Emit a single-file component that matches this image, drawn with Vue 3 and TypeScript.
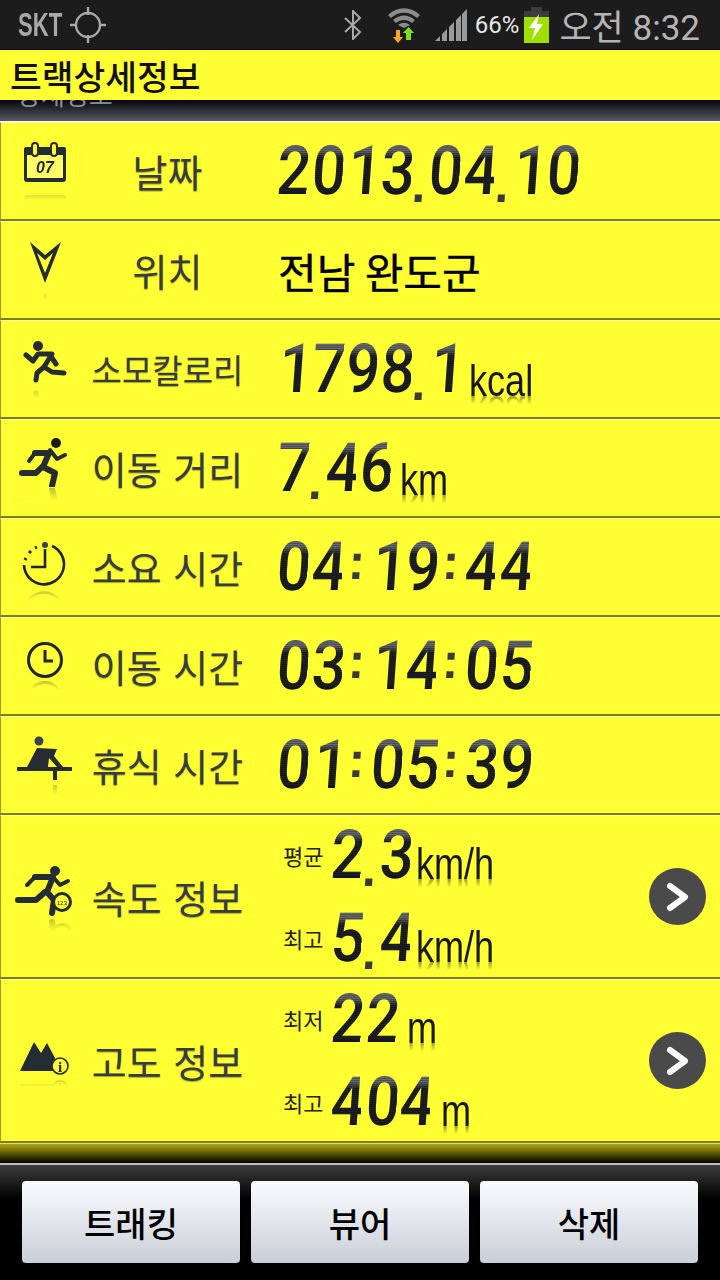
<template>
  <div class="screen">
    <div class="status-bar">
      <span class="carrier">SKT</span>
      <svg class="gps" width="36" height="38" viewBox="0 0 36 38" fill="none" stroke="#a8a8a8" stroke-width="2.4">
        <circle cx="18" cy="19" r="12" />
        <path d="M18 1v8M18 29v8M0 19h7M29 19h7" />
      </svg>
      <span class="spacer"></span>
      <svg class="bt" width="20" height="30" viewBox="0 0 20 30" fill="none" stroke="#a8a8a8" stroke-width="2">
        <path d="M2 8l15 14-7 7V1l7 7L2 22" />
      </svg>
      <svg class="wifi" width="34" height="38" viewBox="0 0 34 38">
        <path d="M1 9C10 0 24 0 33 9l-3 3C22 5 12 5 4 12z" fill="#8c8c8c" />
        <path d="M6 14c7-6 15-6 22 0l-3 3c-5-4-11-4-16 0z" fill="#8c8c8c" />
        <path d="M11 19c4-3 8-3 12 0l-6 3z" fill="#8c8c8c" />
        <path d="M9 24h4v7h3l-5 6-5-6h3z" fill="#f5a623" />
        <path d="M19 34v-7h-3l5.5-6 5.5 6h-3v7z" fill="#7fe01c" />
      </svg>
      <svg class="signal" width="34" height="34" viewBox="0 0 34 34" fill="#9a9a9a">
        <path d="M1 33l5-5v5zM8 33v-7l5-5v12zM15 33V19l5-5v19zM22 33V12l5-5v26zM28 33V6l5-5v32z" />
      </svg>
      <span class="battery-text">66%</span>
      <svg class="battery" width="25" height="36" viewBox="0 0 25 36">
        <path d="M7 0h11v4h7v10H0V4h7z" fill="#3c3c3c" />
        <rect y="10" width="25" height="26" fill="#9fe000" />
        <path d="M15 7L5 21h6l-3 12 11-16h-6z" fill="#fff" />
      </svg>
      <span class="clock">오전 8:32</span>
    </div>

    <div class="title-bar">트랙상세정보</div>
    <div class="sub-strip"><span>상세정보</span></div>

    <div class="rows">
      <div v-for="row in rows" :key="row.label" class="row" :class="{ tall: row.lines }">
        <div class="icon" :style="{ marginTop: (row.iconTop ?? -12) + 'px' }" v-html="row.icon"></div>
        <div class="label" :class="{ compact: row.compact }">{{ row.label }}</div>

        <div v-if="row.lines" class="lines">
          <div v-for="line in row.lines" :key="line.tag" class="line">
            <span class="tag">{{ line.tag }}</span>
            <span class="lcd">
              <span v-for="(ch, i) in line.value" :key="i" :class="cellClass(ch)">{{ ch }}</span>
            </span>
            <span class="unit" :style="{ marginLeft: line.gap + 'px' }">{{ line.unit }}</span>
          </div>
        </div>
        <div v-else-if="row.plain" class="plain">{{ row.plain }}</div>
        <div v-else class="value">
          <span class="lcd">
            <span v-for="(ch, i) in row.value" :key="i" :class="cellClass(ch)">{{ ch }}</span>
          </span>
          <span v-if="row.unit" class="unit">{{ row.unit }}</span>
        </div>

        <div v-if="row.lines" class="arrow">
          <svg width="26" height="30" viewBox="0 0 26 30" fill="none" stroke="#fff" stroke-width="6" stroke-linecap="round" stroke-linejoin="round">
            <path d="M5 4l15 11L5 26" />
          </svg>
        </div>
      </div>
    </div>

    <div class="bottom-fade"></div>

    <div class="footer">
      <button class="btn">트래킹</button>
      <button class="btn">뷰어</button>
      <button class="btn">삭제</button>
    </div>
  </div>
</template>

<script setup lang="ts">
interface Line {
  tag: string;
  value: string;
  unit: string;
  gap: number;
}

interface Row {
  label: string;
  icon: string;
  value?: string;
  unit?: string;
  plain?: string;
  compact?: boolean;
  iconTop?: number;
  lines?: Line[];
}

const dark = '#262c33';

const icons = {
  calendar: `<svg width="44" height="46" viewBox="0 0 44 46"><path d="M3 5h38a2 2 0 0 1 2 2v30a3 3 0 0 1-3 3H4a3 3 0 0 1-3-3V7a2 2 0 0 1 2-2z" fill="${dark}"/><rect x="4" y="13" width="36" height="23" fill="#ffff66"/><rect x="9" y="1" width="6" height="13" rx="3" fill="#ffff33" stroke="${dark}" stroke-width="2"/><rect x="28" y="1" width="6" height="13" rx="3" fill="#ffff33" stroke="${dark}" stroke-width="2"/><text x="22" y="31" font-size="16" font-style="italic" font-weight="700" text-anchor="middle" font-family="Liberation Sans" fill="${dark}">07</text></svg>`,
  pin: `<svg width="34" height="46" viewBox="0 0 34 46"><path d="M2 1l15 13L33 1 17 42zM9 12l8 20 8-20-8 7z" fill="${dark}" fill-rule="evenodd"/></svg>`,
  burn: `<svg width="44" height="46" viewBox="0 0 44 46" fill="none" stroke="${dark}" stroke-width="5" stroke-linecap="round" stroke-linejoin="round"><circle cx="15" cy="6" r="5" fill="${dark}" stroke="none"/><path d="M3 15l7 6 5-7h14l-8 13 8 5 12 1"/><path d="M27 15l6 9M21 27l-7 6-1 7"/></svg>`,
  run: `<svg width="52" height="50" viewBox="0 0 52 50" fill="none" stroke="${dark}" stroke-linecap="round" stroke-linejoin="round"><circle cx="37" cy="6" r="5" fill="#1d1d1d" stroke="none"/><path d="M16 16h14l-6 14 12 6-3 13" stroke-width="6"/><path d="M31 13l7 9 8-4M16 16l-6 8" stroke-width="4"/><path d="M23 30l-6 6H3" stroke-width="6"/></svg>`,
  timer: `<svg width="46" height="46" viewBox="0 0 46 46" fill="none" stroke="#1f252b" stroke-width="2.6"><path d="M30 4a20 20 0 1 1-28 19"/><path d="M23 7v18H9"/><circle cx="23" cy="3" r="3" fill="#39424c" stroke="none"/><path d="M13 6l2-1M7 11l2-2M3 18l1-2" stroke-width="3"/></svg>`,
  clock: `<svg width="38" height="38" viewBox="0 0 38 38" fill="none" stroke="#1f252b" stroke-width="3"><circle cx="19" cy="19" r="16.5"/><path d="M19 9v11h8"/></svg>`,
  rest: `<svg width="56" height="46" viewBox="0 0 56 46"><circle cx="22" cy="5" r="4.5" fill="#39424c"/><path d="M20 12l20 1-3 7 9 11h-6l-8-9-1 9H10z" fill="${dark}"/><rect y="31" width="55" height="4" fill="${dark}"/><rect x="36" y="33" width="4" height="11" fill="${dark}"/></svg>`,
  speed: `<svg width="60" height="52" viewBox="0 0 60 52" fill="none" stroke="${dark}" stroke-linecap="round" stroke-linejoin="round"><circle cx="40" cy="6" r="5" fill="${dark}" stroke="none"/><path d="M20 12h18l-6 15 7 8-2 13" stroke-width="6"/><path d="M38 12l7 8 8-4M20 12l-8 8" stroke-width="4"/><path d="M30 27l-9 8H3" stroke-width="6"/><circle cx="47" cy="37" r="8.5" fill="#ffff33" stroke-width="3"/><text x="47" y="40" font-size="6" text-anchor="middle" font-family="Liberation Sans" fill="${dark}" stroke="none">123</text></svg>`,
  peak: `<svg width="50" height="36" viewBox="0 0 50 36"><path d="M0 30L14 1l7 11 6-10 8 15v13z" fill="${dark}"/><circle cx="40" cy="25" r="8" fill="#ffff33" stroke="${dark}" stroke-width="1.6"/><text x="40" y="31" font-size="15" font-weight="700" text-anchor="middle" font-family="Liberation Serif" fill="${dark}">i</text></svg>`,
};

const rows: Row[] = [
  { label: '날짜', icon: icons.calendar, value: '2013.04.10' },
  { label: '위치', icon: icons.pin, plain: '전남 완도군' },
  { label: '소모칼로리', icon: icons.burn, value: '1798.1', unit: 'kcal', compact: true },
  { label: '이동 거리', icon: icons.run, value: '7.46', unit: 'km' },
  { label: '소요 시간', icon: icons.timer, value: '04:19:44', iconTop: -4 },
  { label: '이동 시간', icon: icons.clock, value: '03:14:05' },
  { label: '휴식 시간', icon: icons.rest, value: '01:05:39' },
  {
    label: '속도 정보',
    icon: icons.speed,
    lines: [
      { tag: '평균', value: '2.3', unit: 'km/h', gap: 4 },
      { tag: '최고', value: '5.4', unit: 'km/h', gap: 4 },
    ],
  },
  {
    label: '고도 정보',
    icon: icons.peak,
    iconTop: -4,
    lines: [
      { tag: '최저', value: '22', unit: 'm', gap: 9 },
      { tag: '최고', value: '404', unit: 'm', gap: 8 },
    ],
  },
];

// digits sit in a fixed cell, "1" hugs the right of it like the app's LCD font
const cellClass = (ch: string) => {
  if (ch === '.') return 'dot';
  if (ch === ':') return 'colon';
  return ch === '1' ? 'digit one' : 'digit';
};
</script>

<style>
html,
body {
  margin: 0;
  background: #000;
}
</style>

<style scoped>
.screen {
  width: 720px;
  height: 1280px;
  overflow: hidden;
  display: flex;
  flex-direction: column;
  background: #000;
  font-family: "Noto Sans CJK KR", "Liberation Sans", sans-serif;
}

.status-bar {
  height: 50px;
  flex: none;
  box-sizing: border-box;
  display: flex;
  align-items: center;
  padding: 0 20px 0 18px;
  background: #1c1c1c;
  border-bottom: 1px solid #000;
}

.carrier {
  font: 700 34px "Liberation Sans", sans-serif;
  color: #a8a8a8;
  display: inline-block;
  width: 52px;
  transform: scaleX(0.65);
  transform-origin: left center;
}

.spacer {
  flex: 1;
}

.bt {
  margin-right: 24px;
}

.wifi {
  margin-right: 13px;
}

.signal {
  margin-right: 7px;
}

.battery-text {
  font: 24px Roboto, sans-serif;
  color: #e6e6e6;
  margin-right: 5px;
}

.battery {
  margin-right: 10px;
}

.clock {
  font: 35px Roboto, "Noto Sans CJK KR", sans-serif;
  color: #b4b4b4;
}

.title-bar {
  height: 50px;
  flex: none;
  padding-left: 10px;
  background: #ffff33;
  color: #111;
  font-size: 34.5px;
  font-weight: 500;
  line-height: 50px;
}

.sub-strip {
  height: 22px;
  flex: none;
  overflow: hidden;
  box-sizing: border-box;
  padding-left: 17px;
  background: linear-gradient(#05060a, #545a68);
  border-bottom: 1px solid #ffffcc;
}

.sub-strip span {
  display: block;
  margin-top: -19px;
  font-size: 26px;
  line-height: 26px;
  color: #888c94;
}

.rows {
  flex: none;
}

.row {
  height: 99px;
  box-sizing: border-box;
  display: flex;
  align-items: center;
  position: relative;
  background: #ffff33;
  border-left: 1px solid #9c9c14;
  border-top: 1px solid #ffffb8;
  border-bottom: 2px solid #80800f;
}

.row.tall {
  height: 164px;
}

.icon {
  width: 88px;
  flex: none;
  display: flex;
  justify-content: center;
  -webkit-box-reflect: below 1px linear-gradient(transparent 75%, rgba(0, 0, 0, 0.3));
}

.label {
  width: 157px;
  flex: none;
  text-align: center;
  font-size: 38px;
  line-height: 44px;
  word-spacing: 3px;
  color: #383c42;
  white-space: nowrap;
  text-shadow: 0 1px 1px rgba(0, 0, 0, 0.35);
}

.label.compact {
  font-size: 33px;
}

.plain {
  margin-left: 32px;
  font-size: 42px;
  color: #000;
  -webkit-text-stroke: 0.4px #000;
}

.value {
  padding-left: 29px;
  display: flex;
  align-items: flex-end;
}

.lines {
  padding-left: 37px;
  display: flex;
  flex-direction: column;
  gap: 29px;
}

.line {
  display: flex;
  align-items: flex-end;
  height: 54px;
}

.tag {
  width: 46px;
  flex: none;
  align-self: center;
  font-size: 22px;
  line-height: 28px;
  color: #222;
}

.lcd {
  display: inline-flex;
  align-items: flex-end;
  height: 54px;
  transform: skewX(-4deg);
}

.digit {
  display: block;
  width: 34.5px;
  text-align: center;
  font: 500 68px/54px Roboto, sans-serif;
  transform: scaleX(0.88);
  color: transparent;
  background: repeating-linear-gradient(0deg, rgba(0, 0, 0, 0.25) 0 1px, transparent 1px 2px),
    linear-gradient(#666a70 0 12%, #1e2024 26% 88%, #17181b 88%);
  -webkit-background-clip: text;
  background-clip: text;
}

.digit.one {
  text-align: right;
  transform-origin: right center;
  padding-right: 3px;
  width: 31.5px;
}

.dot,
.colon {
  display: block;
  text-align: center;
  color: #3a3a3a;
  font-family: "Liberation Sans", sans-serif;
  font-weight: 700;
  font-size: 50px;
}

.dot {
  width: 14px;
  line-height: 20px;
  margin-bottom: 3px;
}

.colon {
  width: 25px;
  line-height: 54px;
  margin-bottom: 5px;
}

.unit {
  display: inline-block;
  margin-left: 7px;
  margin-bottom: -7px;
  transform: scaleX(0.82);
  transform-origin: left bottom;
  font: 44px/44px "Liberation Sans", sans-serif;
  color: #17181a;
  -webkit-box-reflect: below -14px linear-gradient(transparent 65%, rgba(0, 0, 0, 0.4) 82%);
}

.line .unit {
  margin-bottom: -4px;
}

.arrow {
  position: absolute;
  right: 14px;
  top: 52px;
  width: 57px;
  height: 57px;
  border-radius: 50%;
  background: #4a4a4a;
  display: flex;
  align-items: center;
  justify-content: center;
}

.bottom-fade {
  height: 20px;
  flex: none;
  box-sizing: border-box;
  border-top: 1px solid #d8d8a0;
  background: linear-gradient(#b0a810, #030300);
}

.footer {
  flex: 1;
  display: grid;
  grid-template-columns: repeat(3, 218px);
  grid-auto-rows: 82px;
  gap: 11px;
  padding: 16px 0 0 22px;
  border-top: 2px solid #bdbdbd;
  background: linear-gradient(#3c3c3c, #000 34px);
}

.btn {
  border: none;
  border-radius: 4px;
  padding: 0;
  background: linear-gradient(#fafbfd, #c9cfd8);
  color: #000;
  font-family: "Noto Sans CJK KR", sans-serif;
  font-size: 34px;
  font-weight: 500;
}
</style>
